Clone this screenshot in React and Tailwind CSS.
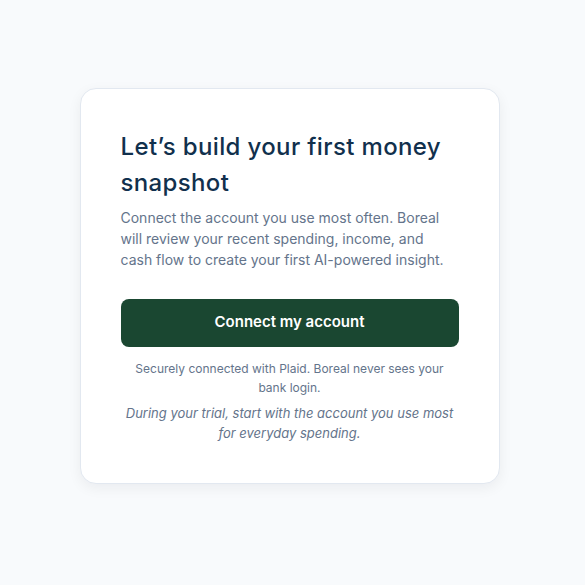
export default function App() {
  return (
    <div className="min-h-screen bg-[#f8fafc] flex items-center justify-center pr-[6px] pb-[14px]" style={{ fontFamily: 'Inter, "Noto Sans", sans-serif' }}>
      <div className="w-[420px] bg-white rounded-2xl border border-[#e2e8f0] shadow-[0_4px_14px_rgba(15,23,42,0.06)] p-10">
        <h1 className="text-2xl leading-9 font-medium text-[#11304d] tracking-[0.015em]">
          Let’s build your first money snapshot
        </h1>
        <p className="mt-1.5 text-sm leading-[21px] text-[#64748b]">
          Connect the account you use most often. Boreal will review your recent spending, income, and cash flow to create your first AI-powered insight.
        </p>
        <button className="mt-[29px] w-full h-12 rounded-lg bg-[#1a4731] text-white text-[15px] font-semibold">
          Connect my account
        </button>
        <p className="mt-3 mx-auto max-w-[320px] text-center text-xs leading-[19px] text-[#64748b]">
          Securely connected with Plaid. Boreal never sees your bank login.
        </p>
        <p className="mt-1.5 text-center text-[13px] leading-5 italic text-[#64748b]">
          During your trial, start with the account you use most for everyday spending.
        </p>
      </div>
    </div>
  );
}
